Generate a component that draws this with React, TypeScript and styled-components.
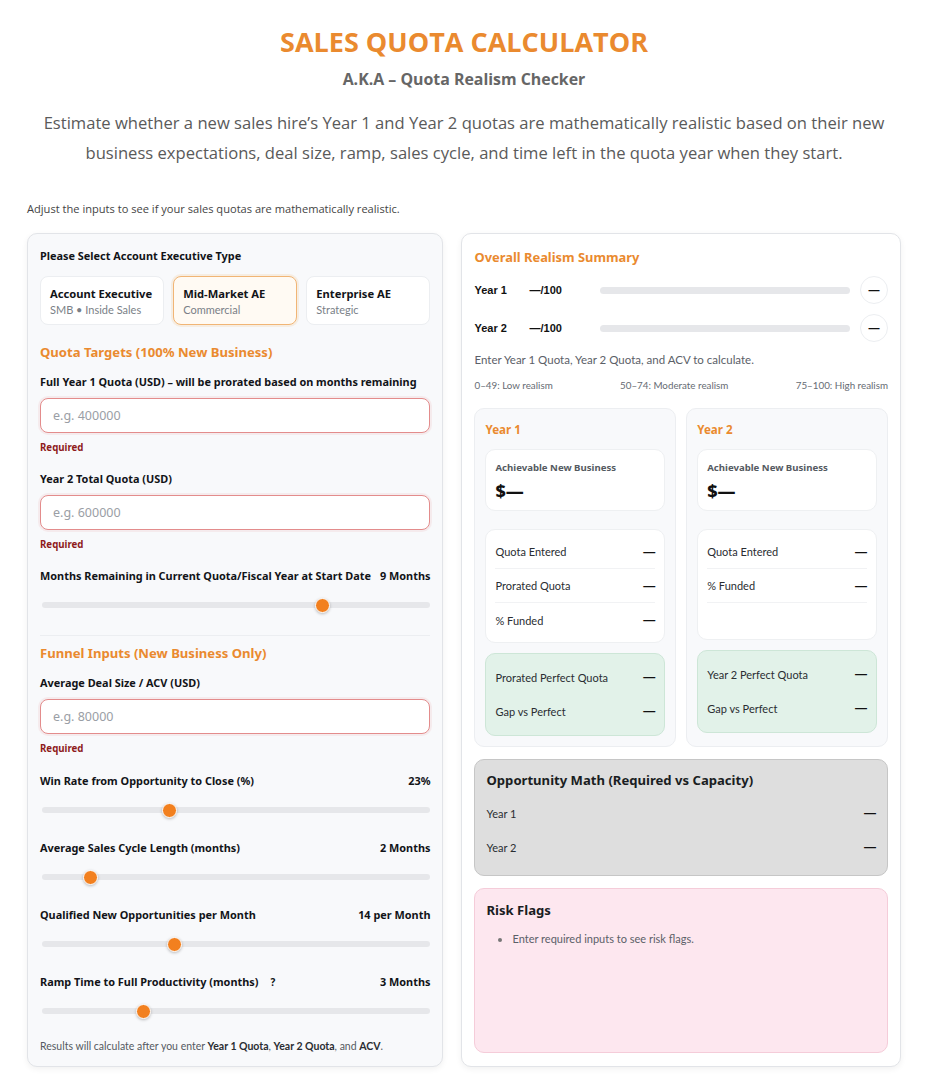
import React from "react";
import styled, { createGlobalStyle } from "styled-components";

const GlobalStyle = createGlobalStyle`
  * { box-sizing: border-box; }
  body {
    margin: 0;
    background: #ffffff;
    font-family: Lato, "Noto Sans", Arial, sans-serif;
    color: #1f2329;
  }
`;

const ORANGE = "#ea8a2f";
const HEAD_FONT = `"Open Sans", "Noto Sans", sans-serif`;
const BOLD_FONT = `"Noto Sans", Lato, sans-serif`;
const DASH_FONT = `"Liberation Sans", Arial, sans-serif`;

const Page = styled.div`
  max-width: 874px;
  margin: 0 auto;
  padding: 22px 0 14px;
  position: relative;
  left: 1px;
`;

const Header = styled.header`
  text-align: center;
  font-family: ${HEAD_FONT};
`;

const Title = styled.h1`
  margin: 0;
  font-size: 27px;
  line-height: 40px;
  font-weight: 700;
  color: ${ORANGE};
`;

const Subtitle = styled.h2`
  margin: 6px 0 0;
  font-size: 15.9px;
  line-height: 22px;
  font-weight: 700;
  color: #666;
`;

const Lead = styled.p`
  margin: 18px auto 0;
  max-width: 870px;
  font-size: 16.6px;
  line-height: 30px;
  font-weight: 400;
  color: #5a5a5a;
`;

const Hint = styled.p`
  margin: 33px 0 16px;
  font-family: ${HEAD_FONT};
  font-size: 11.1px;
  line-height: 16px;
  color: #444;
`;

const Columns = styled.div`
  display: grid;
  grid-template-columns: 416fr 439fr;
  gap: 18px;
  align-items: stretch;
`;

const Panel = styled.section<{ $tint?: boolean }>`
  background: ${(p) => (p.$tint ? "#f8f9fb" : "#ffffff")};
  border: 1px solid #e2e4e8;
  border-radius: 10px;
  box-shadow: 0 2px 6px rgba(0, 0, 0, 0.06);
  padding: 14px 12px 13px;
  display: flex;
  flex-direction: column;
`;

const Label = styled.div`
  font-family: ${BOLD_FONT};
  font-size: 10.9px;
  line-height: 16px;
  font-weight: 700;
  color: #121418;
`;

const CardRow = styled.div`
  display: grid;
  grid-template-columns: repeat(3, 1fr);
  gap: 9px;
  margin-top: 12px;
`;

const TypeCard = styled.button<{ $active?: boolean }>`
  text-align: left;
  font-family: inherit;
  height: 49px;
  padding: 9px 9px;
  border-radius: 8px;
  border: 1px solid ${(p) => (p.$active ? "#f1b575" : "#eceef1")};
  background: ${(p) => (p.$active ? "#fffaf3" : "#ffffff")};
  box-shadow: ${(p) => (p.$active ? "0 0 0 2px rgba(241,181,117,0.18)" : "none")};
  display: flex;
  flex-direction: column;
  gap: 1px;
`;

const TypeTitle = styled.span`
  font-family: ${BOLD_FONT};
  font-size: 11.2px;
  line-height: 16px;
  font-weight: 700;
  color: #121418;
`;

const TypeSub = styled.span`
  font-size: 11px;
  line-height: 14px;
  color: #7a7f87;
`;

const SectionTitle = styled.h3<{ $top?: number }>`
  margin: ${(p) => p.$top ?? 17}px 0 0;
  font-family: ${BOLD_FONT};
  font-size: 13.1px;
  line-height: 20px;
  font-weight: 700;
  color: ${ORANGE};
`;

const Field = styled.div<{ $top?: number }>`
  margin-top: ${(p) => p.$top ?? 12}px;
`;

const TextInput = styled.input`
  display: block;
  width: 100%;
  height: 35px;
  margin-top: 8px;
  padding: 0 12px;
  border: 1px solid #e38c8c;
  border-radius: 8px;
  background: #fff;
  box-shadow: 0 0 0 2px rgba(227, 140, 140, 0.12);
  font-family: "Noto Sans", Lato, sans-serif;
  font-size: 12.5px;
  color: #222;
  outline: none;
  &::placeholder { color: #9a9ea5; }
`;

const Required = styled.div`
  margin-top: 8px;
  font-family: ${BOLD_FONT};
  font-size: 9.7px;
  line-height: 14px;
  font-weight: 700;
  color: #8e1b1b;
`;

const SliderHead = styled.div`
  display: flex;
  justify-content: space-between;
  align-items: center;
  gap: 4px;
  white-space: nowrap;
`;

const Help = styled.span`
  margin-left: 12px;
  font-size: 10px;
  font-weight: 700;
`;

const Track = styled.div`
  position: relative;
  height: 20px;
  margin: 11px 0 0 2px;
  &::before {
    content: "";
    position: absolute;
    left: 0;
    right: 0;
    top: 7px;
    height: 6px;
    border-radius: 3px;
    background: #e6e7ea;
  }
`;

const Thumb = styled.span`
  position: absolute;
  top: 3px;
  width: 15px;
  height: 15px;
  margin-left: -7.5px;
  border-radius: 50%;
  background: #f2801f;
  border: 1.5px solid #fff;
  box-shadow: 0 1px 3px rgba(0, 0, 0, 0.25);
`;

const Divider = styled.hr`
  border: 0;
  height: 1px;
  background: #eceef1;
  margin: 20px 0 0;
`;

const Note = styled.p`
  margin: 18px 0 0;
  font-size: 10.5px;
  line-height: 14px;
  color: #555a61;
  b { color: #2a2d32; font-weight: 700; }
`;

/* right column */

const SummaryTitle = styled.h3`
  margin: 0;
  font-family: ${BOLD_FONT};
  font-size: 12.9px;
  line-height: 18px;
  font-weight: 700;
  color: ${ORANGE};
`;

const ScoreRow = styled.div<{ $top: number }>`
  display: grid;
  grid-template-columns: 55px 71px 1fr 28px;
  align-items: center;
  height: 30px;
  margin-top: ${(p) => p.$top}px;
  font-family: ${DASH_FONT};
  font-size: 11px;
  font-weight: 700;
  color: #111;
`;

const ScoreBar = styled.div`
  height: 7px;
  border-radius: 4px;
  background: #e6e7ea;
  margin-right: 10px;
`;

const ScoreBadge = styled.div`
  width: 28px;
  height: 28px;
  border-radius: 50%;
  border: 1px solid #eceef1;
  background: #fff;
  display: flex;
  align-items: center;
  justify-content: center;
  font-size: 11px;
`;

const Muted = styled.p`
  margin: 9px 0 0;
  font-size: 11.5px;
  line-height: 16px;
  color: #5b6068;
`;

const Legend = styled.div`
  margin-top: 10px;
  display: flex;
  justify-content: space-between;
  font-size: 9.8px;
  line-height: 14px;
  color: #666b73;
`;

const YearGrid = styled.div`
  display: grid;
  grid-template-columns: 1fr 1fr;
  gap: 10px;
  margin-top: 16px;
`;

const YearCard = styled.div`
  background: #f8f9fb;
  border: 1px solid #eceef1;
  border-radius: 10px;
  padding: 13px 10px 10px;
  display: flex;
  flex-direction: column;
`;

const YearTitle = styled.div`
  font-family: ${BOLD_FONT};
  font-size: 11.6px;
  line-height: 16px;
  font-weight: 700;
  color: ${ORANGE};
`;

const WhiteBox = styled.div<{ $min?: number; $top: number }>`
  background: #fff;
  border: 1px solid #eef0f2;
  border-radius: 10px;
  margin-top: ${(p) => p.$top}px;
  min-height: ${(p) => p.$min ?? 0}px;
  padding: 0 9px;
`;

const Achievable = styled.div`
  padding: 11px 0 7px;
`;

const SmallCaption = styled.div`
  font-family: ${BOLD_FONT};
  font-size: 9.6px;
  line-height: 14px;
  font-weight: 700;
  color: #555a61;
`;

const BigValue = styled.div`
  margin-top: 4px;
  font-family: ${BOLD_FONT};
  font-size: 18px;
  line-height: 24px;
  font-weight: 800;
  color: #111;
`;

const StatList = styled.div`
  padding-top: 5px;
`;

const Stat = styled.div<{ $last?: boolean }>`
  display: flex;
  justify-content: space-between;
  align-items: center;
  height: 34px;
  font-size: 11px;
  color: #2a2d32;
  border-bottom: ${(p) => (p.$last ? "none" : "1px solid #f1f2f4")};
`;

const Dash = styled.span`
  font-family: ${DASH_FONT};
  font-size: 12px;
  font-weight: 700;
  color: #111;
`;

const GreenBox = styled.div`
  margin-top: 10px;
  background: #e2f2e9;
  border: 1px solid #cde6d7;
  border-radius: 10px;
  padding: 6px 9px 7px;
`;

const GreenStat = styled(Stat)`
  border-bottom: none;
`;

const OppBox = styled.div`
  margin-top: 12px;
  background: #dedede;
  border: 1px solid #c6c6c6;
  border-radius: 10px;
  padding: 10px 11px 11px;
`;

const OppRows = styled.div`
  margin-top: 6px;
`;

const BoxTitle = styled.h4`
  margin: 0;
  font-family: ${BOLD_FONT};
  font-size: 13.1px;
  line-height: 20px;
  font-weight: 700;
  color: #1a1d22;
`;

const RiskBox = styled.div`
  flex: 1;
  margin-top: 12px;
  background: #fde7ef;
  border: 1px solid #f5ccd9;
  border-radius: 10px;
  padding: 11px 11px;
`;

const RiskList = styled.ul`
  margin: 11px 0 0;
  padding-left: 26px;
  font-size: 11px;
  line-height: 16px;
  color: #5b6068;
  li::marker { color: #777; }
`;

type SliderSpec = {
  label: string;
  value: number;
  min: number;
  max: number;
  display: string;
  help?: boolean;
};

const funnelSliders: SliderSpec[] = [
  { label: "Win Rate from Opportunity to Close (%)", value: 23, min: 0, max: 70, display: "23%" },
  { label: "Average Sales Cycle Length (months)", value: 2, min: 1, max: 9, display: "2 Months" },
  { label: "Qualified New Opportunities per Month", value: 14, min: 1, max: 39, display: "14 per Month" },
  { label: "Ramp Time to Full Productivity (months)", value: 3, min: 0, max: 11.5, display: "3 Months", help: true },
];

function Slider({ spec, top }: { spec: SliderSpec; top: number }) {
  const pct = ((spec.value - spec.min) / (spec.max - spec.min)) * 100;
  return (
    <Field $top={top}>
      <SliderHead>
        <Label>
          {spec.label}
          {spec.help && <Help>?</Help>}
        </Label>
        <Label>{spec.display}</Label>
      </SliderHead>
      <Track>
        <Thumb style={{ left: `${pct}%` }} />
      </Track>
    </Field>
  );
}

function StatLine({ label, last }: { label: string; last?: boolean }) {
  return (
    <Stat $last={last}>
      <span>{label}</span>
      <Dash>—</Dash>
    </Stat>
  );
}

function GreenLine({ label }: { label: string }) {
  return (
    <GreenStat>
      <span>{label}</span>
      <Dash>—</Dash>
    </GreenStat>
  );
}

const aeTypes = [
  { title: "Account Executive", sub: "SMB • Inside Sales" },
  { title: "Mid-Market AE", sub: "Commercial", active: true },
  { title: "Enterprise AE", sub: "Strategic" },
];

export default function App() {
  return (
    <>
      <GlobalStyle />
      <Page>
        <Header>
          <Title>SALES QUOTA CALCULATOR</Title>
          <Subtitle>A.K.A – Quota Realism Checker</Subtitle>
          <Lead>
            Estimate whether a new sales hire’s Year 1 and Year 2 quotas are mathematically realistic based on their new
            business expectations, deal size, ramp, sales cycle, and time left in the quota year when they start.
          </Lead>
        </Header>
        <Hint>Adjust the inputs to see if your sales quotas are mathematically realistic.</Hint>

        <Columns>
          <Panel $tint>
            <Label>Please Select Account Executive Type</Label>
            <CardRow>
              {aeTypes.map((t) => (
                <TypeCard key={t.title} $active={t.active}>
                  <TypeTitle>{t.title}</TypeTitle>
                  <TypeSub>{t.sub}</TypeSub>
                </TypeCard>
              ))}
            </CardRow>

            <SectionTitle>Quota Targets (100% New Business)</SectionTitle>
            <Field>
              <Label>Full Year 1 Quota (USD) – will be prorated based on months remaining</Label>
              <TextInput placeholder="e.g. 400000" />
              <Required>Required</Required>
            </Field>
            <Field $top={16}>
              <Label>Year 2 Total Quota (USD)</Label>
              <TextInput placeholder="e.g. 600000" />
              <Required>Required</Required>
            </Field>
            <Slider
              top={16}
              spec={{ label: "Months Remaining in Current Quota/Fiscal Year at Start Date", value: 9, min: 1.2, max: 12, display: "9 Months" }}
            />
            <Divider />

            <SectionTitle $top={7}>Funnel Inputs (New Business Only)</SectionTitle>
            <Field>
              <Label>Average Deal Size / ACV (USD)</Label>
              <TextInput placeholder="e.g. 80000" />
              <Required>Required</Required>
            </Field>
            {funnelSliders.map((s, i) => (
              <Slider key={s.label} spec={s} top={i === 0 ? 17 : 20} />
            ))}
            <Note>
              Results will calculate after you enter <b>Year 1 Quota</b>, <b>Year 2 Quota</b>, and <b>ACV</b>.
            </Note>
          </Panel>

          <Panel>
            <SummaryTitle>Overall Realism Summary</SummaryTitle>
            <ScoreRow $top={9}>
              <span>Year 1</span>
              <span>—/100</span>
              <ScoreBar />
              <ScoreBadge>—</ScoreBadge>
            </ScoreRow>
            <ScoreRow $top={8}>
              <span>Year 2</span>
              <span>—/100</span>
              <ScoreBar />
              <ScoreBadge>—</ScoreBadge>
            </ScoreRow>
            <Muted>Enter Year 1 Quota, Year 2 Quota, and ACV to calculate.</Muted>
            <Legend>
              <span>0–49: Low realism</span>
              <span>50–74: Moderate realism</span>
              <span>75–100: High realism</span>
            </Legend>

            <YearGrid>
              <YearCard>
                <YearTitle>Year 1</YearTitle>
                <WhiteBox $top={11}>
                  <Achievable>
                    <SmallCaption>Achievable New Business</SmallCaption>
                    <BigValue>$—</BigValue>
                  </Achievable>
                </WhiteBox>
                <WhiteBox $top={18} $min={114}>
                  <StatList>
                    <StatLine label="Quota Entered" />
                    <StatLine label="Prorated Quota" />
                    <StatLine label="% Funded" last />
                  </StatList>
                </WhiteBox>
                <GreenBox>
                  <GreenLine label="Prorated Perfect Quota" />
                  <GreenLine label="Gap vs Perfect" />
                </GreenBox>
              </YearCard>

              <YearCard>
                <YearTitle>Year 2</YearTitle>
                <WhiteBox $top={11}>
                  <Achievable>
                    <SmallCaption>Achievable New Business</SmallCaption>
                    <BigValue>$—</BigValue>
                  </Achievable>
                </WhiteBox>
                <WhiteBox $top={18} $min={111}>
                  <StatList>
                    <StatLine label="Quota Entered" />
                    <StatLine label="% Funded" />
                  </StatList>
                </WhiteBox>
                <GreenBox>
                  <GreenLine label="Year 2 Perfect Quota" />
                  <GreenLine label="Gap vs Perfect" />
                </GreenBox>
              </YearCard>
            </YearGrid>

            <OppBox>
              <BoxTitle>Opportunity Math (Required vs Capacity)</BoxTitle>
              <OppRows>
                <StatLine label="Year 1" last />
                <StatLine label="Year 2" last />
              </OppRows>
            </OppBox>

            <RiskBox>
              <BoxTitle>Risk Flags</BoxTitle>
              <RiskList>
                <li>Enter required inputs to see risk flags.</li>
              </RiskList>
            </RiskBox>
          </Panel>
        </Columns>
      </Page>
    </>
  );
}
